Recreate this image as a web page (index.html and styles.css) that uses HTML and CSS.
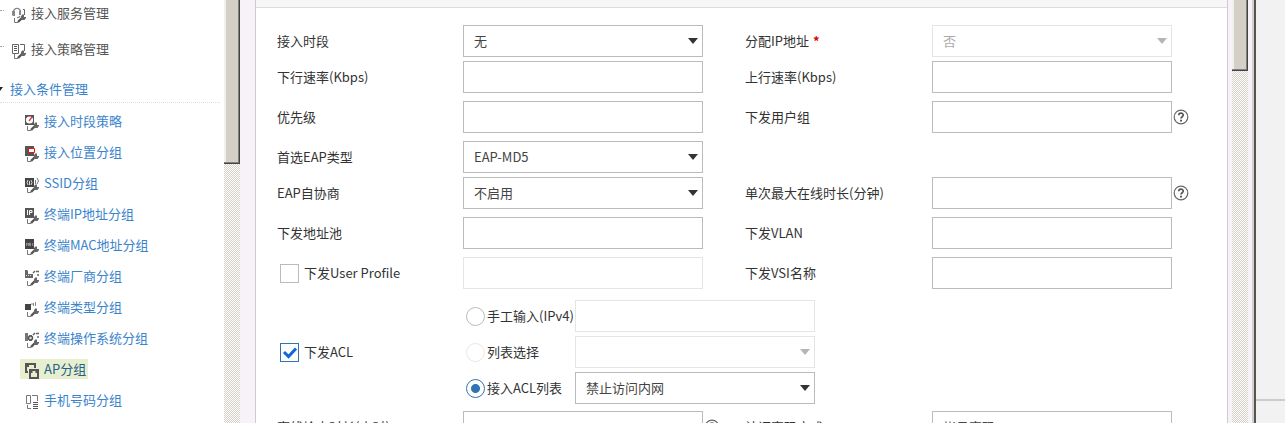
FILE: index.html
```
<!DOCTYPE html>
<html lang="zh-CN">
<head>
  <meta charset="UTF-8">
  <meta name="viewport" content="width=device-width, initial-scale=1.0">
  <title>接入策略管理</title>
  <link rel="stylesheet" href="styles.css">
</head>
<body>
  <svg class="defs" aria-hidden="true">
    <symbol id="wrench" viewBox="0 0 14 16">
      <path d="M2.500 11v4.500H6" fill="none" stroke="#777"/>
      <path d="M6 15L11 10" fill="none" stroke="#555" stroke-width="2.400"/>
      <path d="M11 7L9 9v3l1 1h2.500L14 11v-1h-2V8z" fill="#666"/>
    </symbol>
    <symbol id="help" viewBox="0 0 16 16">
      <circle cx="8" cy="8" r="6.800" fill="#fff" stroke="#666" stroke-width="1.200"/>
      <path d="M5.800 6.300C5.800 3.500 10.200 3.500 10.200 6.200 10.200 7.700 8 7.800 8 9.600" fill="none" stroke="#555" stroke-width="1.700"/>
      <path d="M7 10.700h2v1.800H7z" fill="#555"/>
    </symbol>
  </svg>

  <div class="layout">
    <nav class="sidebar">
      <ul class="menu">
        <li><a href="#service"><svg class="icon" viewBox="0 0 14 16"><path d="M1.500 5.500C1 0 9 0 8.500 5.500M8 9Q7 11 5 10.500" fill="none" stroke="#888" stroke-width="1.400"/><path d="M0 4h3v5H1L0 8zM7 4h2v4H7z" fill="#888"/><path d="M11 2.500h1.500V8" fill="none" stroke="#666"/><use href="#wrench"/></svg>接入服务管理</a></li>
        <li><a href="#policy"><svg class="icon" viewBox="0 0 14 16"><path d="M.500 1.500h6v9h-6zM8 1.500h4.500V8" fill="#fff" stroke="#666"/><path d="M2 3.500h3M2 5.500h3M2 7.500h3" stroke="#555"/><use href="#wrench"/></svg>接入策略管理</a></li>
      </ul>
      <a class="menu-title" href="#condition">接入条件管理</a>
      <ul class="submenu">
        <li><a href="#time"><svg class="icon" viewBox="0 0 14 16"><path d="M0 0h9v10H0z" fill="#555"/><circle cx="4.500" cy="5" r="3.600" fill="#fff"/><path d="M4 6l3-4" stroke="#e33" stroke-width="1.300"/><use href="#wrench"/></svg>接入时段策略</a></li>
        <li><a href="#position"><svg class="icon" viewBox="0 0 14 16"><path d="M0 0h9v10H0z" fill="#555"/><use href="#wrench"/><path d="M3.500 2.500h6v4h-6z" fill="#fff" stroke="#e11"/></svg>接入位置分组</a></li>
        <li><a href="#ssid"><svg class="icon" viewBox="0 0 14 16"><path d="M0 1h9v9H0z" fill="#444"/><path d="M3 3Q1 5.500 3 8M6 3q2 2.500 0 5M4.500 4v4" fill="none" stroke="#ddd"/><path d="M10.500 3v4M12 1q3 3 0 6" fill="none" stroke="#777"/><use href="#wrench"/></svg>SSID分组</a></li>
        <li><a href="#ip"><svg class="icon" viewBox="0 0 14 16"><path d="M0 0h9v10H0z" fill="#555"/><path d="M2.500 2v5M4.500 7V2.500h2.500v2H5" fill="none" stroke="#fff"/><use href="#wrench"/></svg>终端IP地址分组</a></li>
        <li><a href="#mac"><svg class="icon" viewBox="0 0 14 16"><path d="M0 0h9v10H0z" fill="#444"/><path d="M1.500 7V4l1 1.500 1-1.500v3M4.500 7V4h1v3M8.500 4.500h-1v2h1" fill="none" stroke="#aaa" stroke-width=".7"/><use href="#wrench"/></svg>终端MAC地址分组</a></li>
        <li><a href="#vendor"><svg class="icon" viewBox="0 0 14 16"><path d="M0 0h2l1 1v3h5v4H0z" fill="#666"/><path d="M1 5.500h6" stroke="#ddd" stroke-dasharray="1 1"/><path d="M8 3l2-2M11 1.500h3M13 4v2" stroke="#666" stroke-width="1.500"/><use href="#wrench"/></svg>终端厂商分组</a></li>
        <li><a href="#type"><svg class="icon" viewBox="0 0 14 16"><path d="M0 3h6v6H0z" fill="#444"/><path d="M6 3h2M8.500 2v3M10.500 1v4" stroke="#888"/><use href="#wrench"/></svg>终端类型分组</a></li>
        <li><a href="#os"><svg class="icon" viewBox="0 0 14 16"><path d="M0 1h3v8H0zM4 3h3v6H4z" fill="#777"/><circle cx="5.500" cy="6" r="2" fill="#ddd" stroke="#555" stroke-width="1.500"/><path d="M8 3l2-2M11 1.500h3M13 4v2" stroke="#666" stroke-width="1.500"/><use href="#wrench"/></svg>终端操作系统分组</a></li>
        <li><a class="active" href="#ap"><svg class="icon" viewBox="0 0 14 16"><path d="M1 9V1h9v4M0 9h3" fill="none" stroke="#555" stroke-width="2"/><path d="M2 2h2v2H2z" fill="#555"/><path d="M4 6h10v10H4z" fill="#555"/><path d="M6 14v-4h1.500V8h3v2H12v4z" fill="#e8efcf"/></svg>AP分组</a></li>
        <li><a href="#phone"><svg class="icon" viewBox="0 0 14 16"><path d="M1.500 1.500h4v8h-4zM7 1.500h5.500V7M2.500 11v3.500H6" fill="none" stroke="#777"/><path d="M8 8.500h5M8 10.500h5M8 12.500h5M8 14.500h5" stroke="#555"/></svg>手机号码分组</a></li>
      </ul>
    </nav>
    <div class="scrollbar"><div class="thumb side-thumb"></div></div>

    <main class="panel">
      <div class="panel-head"></div>
      <form class="form">
        <div class="row tight">
          <label for="period">接入时段</label>
          <div class="cell"><select id="period" class="field"><option>无</option></select></div>
          <label for="assignIp">分配IP地址 <b class="required">*</b></label>
          <div class="cell"><select id="assignIp" class="field" disabled><option>否</option></select></div>
        </div>
        <div class="row">
          <label for="down">下行速率(Kbps)</label>
          <div class="cell"><input id="down" class="field" type="text"></div>
          <label for="up">上行速率(Kbps)</label>
          <div class="cell"><input id="up" class="field" type="text"></div>
        </div>
        <div class="row">
          <label for="priority">优先级</label>
          <div class="cell"><input id="priority" class="field" type="text"></div>
          <label for="userGroup">下发用户组</label>
          <div class="cell"><input id="userGroup" class="field" type="text"><svg class="help"><use href="#help"/></svg></div>
        </div>
        <div class="row tight">
          <label for="eapType">首选EAP类型</label>
          <div class="cell"><select id="eapType" class="field"><option>EAP-MD5</option></select></div>
        </div>
        <div class="row">
          <label for="eapAuto">EAP自协商</label>
          <div class="cell"><select id="eapAuto" class="field"><option>不启用</option></select></div>
          <label for="maxOnline">单次最大在线时长(分钟)</label>
          <div class="cell"><input id="maxOnline" class="field" type="text"><svg class="help"><use href="#help"/></svg></div>
        </div>
        <div class="row">
          <label for="pool">下发地址池</label>
          <div class="cell"><input id="pool" class="field" type="text"></div>
          <label for="vlan">下发VLAN</label>
          <div class="cell"><input id="vlan" class="field" type="text"></div>
        </div>
        <div class="row">
          <label class="check"><input type="checkbox">下发User Profile</label>
          <div class="cell"><input class="field" type="text" aria-label="User Profile" disabled></div>
          <label for="vsi">下发VSI名称</label>
          <div class="cell"><input id="vsi" class="field" type="text"></div>
        </div>
        <div class="row acl">
          <label class="check"><input type="checkbox" checked>下发ACL</label>
          <div class="acl-list">
            <div class="acl-item">
              <label><input type="radio" name="acl">手工输入(IPv4)</label>
              <input class="field" type="text" aria-label="手工输入" disabled>
            </div>
            <div class="acl-item">
              <label><input type="radio" name="acl" disabled>列表选择</label>
              <select class="field" aria-label="列表选择" disabled></select>
            </div>
            <div class="acl-item">
              <label><input type="radio" name="acl" checked>接入ACL列表</label>
              <select class="field" aria-label="接入ACL列表"><option>禁止访问内网</option></select>
            </div>
          </div>
        </div>
        <div class="row">
          <label for="offline">离线检查时长(小时)</label>
          <div class="cell"><input id="offline" class="field" type="text"><svg class="help"><use href="#help"/></svg></div>
          <label for="pwdMode">认证密码方式</label>
          <div class="cell"><select id="pwdMode" class="field"><option>帐号密码</option></select></div>
        </div>
      </form>
    </main>
    <div class="scrollbar"><div class="thumb main-thumb"></div></div>
    <div class="window-edge"></div>
    <aside class="outside"><div class="outside-top"></div></aside>
  </div>
</body>
</html>
```

FILE: styles.css
```
* {
  box-sizing: border-box;
}
body {
  margin: 0;
  font-family: "Noto Sans CJK SC", sans-serif;
  font-size: 13px;
  line-height: 20px;
  color: #333;
  background-color: #f6f2f7;
}
ul {
  list-style: none;
  margin: 0;
  padding: 0;
}
a {
  color: #3a84cc;
  text-decoration: none;
}
.defs {
  display: none;
}
.layout {
  display: flex;
  height: 100vh;
  overflow: hidden;
}

/* left menu */
.sidebar {
  width: 224px;
  flex-shrink: 0;
  overflow: hidden;
  background-color: #fff;
}
.menu {
  margin-top: -5px;
}
.menu a {
  display: flex;
  align-items: center;
  height: 36px;
  color: #555;
}
.menu a::before {
  content: "";
  width: 4px;
  margin: 0 8px 6px 0;
  border-top: 1px dotted #8ab;
}
.icon {
  width: 14px;
  height: 16px;
  margin: 4px 5px 0 0;
  flex-shrink: 0;
}
.menu-title {
  display: flex;
  align-items: center;
  height: 36px;
  margin-right: 4px;
  padding-top: 9px;
  border-bottom: 1px dotted #ddd;
}
.menu-title::before {
  content: "";
  margin-right: 7px;
  border-top: 4px solid #222;
  border-right: 3px solid transparent;
}
.submenu {
  padding-top: 2px;
}
.submenu li {
  display: flex;
  align-items: center;
  height: 31px;
  padding-left: 20px;
}
.submenu a {
  display: flex;
  align-items: center;
  height: 20px;
  padding: 0 2px 0 5px;
}
.submenu .active {
  color: #255f8f;
  background-color: #e8efcf;
}

/* scrollbars */
.scrollbar {
  width: 16px;
  flex-shrink: 0;
  background: repeating-conic-gradient(#d4d0c8 0 25%, #fff 0 50%) 0 0 / 2px 2px;
}
.thumb {
  background-color: #d4d0c8;
  border: solid #444;
  border-width: 0 1px 1px 0;
  box-shadow: inset -1px -1px 0 #808080, inset 2px 0 0 #f2f0ec;
}
.side-thumb {
  height: 164px;
}
.main-thumb {
  height: 71px;
}
.window-edge {
  width: 8px;
  flex-shrink: 0;
  border-right: 2px solid #555;
  box-shadow: inset -2px 0 0 #d4d0c8;
}
.outside {
  width: 29px;
  flex-shrink: 0;
  background-color: #f2f2f2;
}
.outside-top {
  height: 401px;
  border-bottom: 2px solid #ccc;
}

/* form */
.panel {
  flex: 1;
  margin: 0 4px 0 15px;
  overflow: hidden;
  background-color: #fff;
  border: solid #ccc;
  border-width: 0 1px;
}
.panel-head {
  height: 8px;
  background-color: #f7f7f7;
  border-bottom: 1px solid #ddd;
}
.form {
  padding: 17px 0 0 21px;
}
.row {
  display: grid;
  grid-template-columns: 186fr 282fr 187fr 295fr;
  align-items: center;
  padding-bottom: 8px;
}
.row.tight {
  padding-bottom: 4px;
}
.cell {
  display: flex;
  align-items: center;
  gap: 1px;
}
.field {
  width: 240px;
  height: 32px;
  padding: 0 10px;
  font: inherit;
  color: #444;
  background-color: #fff;
  border: 1px solid #bbb;
  border-radius: 0;
}
select.field {
  appearance: none;
  background-image: url("data:image/svg+xml,%3Csvg xmlns='http://www.w3.org/2000/svg' width='10' height='6'%3E%3Cpath d='M0 0h10L5 6z' fill='%23333'/%3E%3C/svg%3E");
  background-repeat: no-repeat;
  background-position: right 4px top 12px;
}
.field:disabled {
  color: #aaa;
  border-color: #e5e5e5;
  opacity: 1;
}
select.field:disabled {
  background-image: url("data:image/svg+xml,%3Csvg xmlns='http://www.w3.org/2000/svg' width='10' height='6'%3E%3Cpath d='M0 0h10L5 6z' fill='%23b5b5b5'/%3E%3C/svg%3E");
}
.required {
  margin-left: 1px;
  color: #d00;
}
.help {
  width: 16px;
  height: 16px;
}
.check {
  display: flex;
  align-items: center;
  gap: 5px;
  padding-left: 3px;
}
input[type="checkbox"],
input[type="radio"] {
  appearance: none;
  width: 19px;
  height: 19px;
  margin: 0;
  border: 1px solid #bbb;
  background-color: #fff;
}
input[type="checkbox"]:checked {
  border-color: #2f74b5;
  background-image: url("data:image/svg+xml,%3Csvg xmlns='http://www.w3.org/2000/svg' width='17' height='17'%3E%3Cpath d='M3 8l4.500 4.500L15 4.500' fill='none' stroke='%231068d8' stroke-width='3'/%3E%3C/svg%3E");
}
input[type="radio"] {
  border-radius: 50%;
}
input[type="radio"]:disabled {
  border-color: #e8e8e8;
}
input[type="radio"]:checked {
  border-color: #2f74b5;
  background-image: radial-gradient(circle, #2f74b5 4px, transparent 5px);
}
.acl {
  padding: 3px 0 7px;
}
.acl-list {
  grid-column: span 3;
}
.acl-item {
  display: flex;
}
.acl-item + .acl-item {
  margin-top: 4px;
}
.acl-item label {
  display: flex;
  align-items: center;
  gap: 2px;
  width: 112px;
  padding-left: 3px;
}
```
